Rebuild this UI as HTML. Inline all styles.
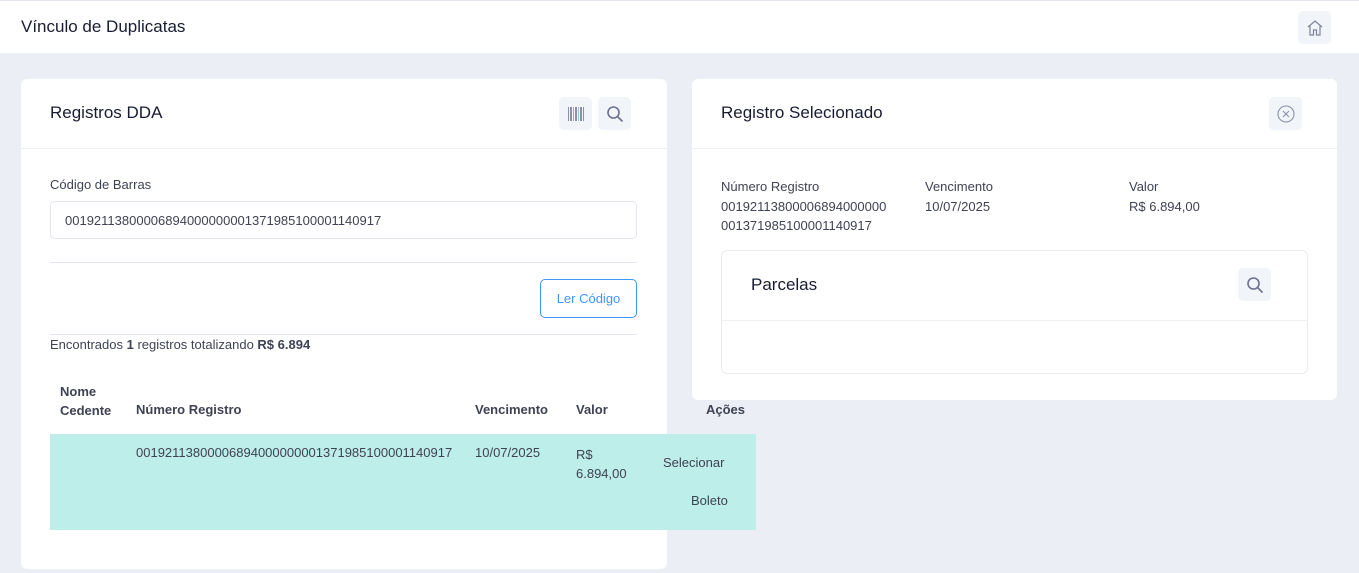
<!DOCTYPE html><html><head><style>
*{box-sizing:border-box;margin:0;padding:0}
body{width:1359px;height:573px;background:#eceef5;font-family:"Liberation Sans",sans-serif;color:#3f4254;position:relative;overflow:hidden}
.abs{position:absolute}
.hdr{left:0;top:0;width:1359px;height:53px;background:#fff;border-top:1px solid #e4e6ef}
.card{background:#fff;border-radius:6px}
.btn{width:33px;height:33px;background:#f1f4f8;border-radius:5px;display:flex;align-items:center;justify-content:center}
.t{font-size:13px;color:#3f4254}
.b{font-weight:bold}
</style></head><body>
<div class="abs hdr"></div>
<div class="abs" style="left:21px;top:17px;font-size:17px;color:#181c32">Vínculo de Duplicatas</div>
<div class="abs btn" style="left:1298px;top:11px"><svg width="18" height="18" viewBox="0 0 18 18" fill="none" stroke="#7e8299" stroke-width="1.2"><path d="M2 8L9 2l7 6M4 7v9h3.5v-5h3v5H14V7"/></svg></div>

<div class="abs card" style="left:21px;top:79px;width:646px;height:490px"></div>
<div class="abs" style="left:21px;top:148px;width:646px;height:1px;background:#eff2f5"></div>
<div class="abs" style="left:50px;top:103px;font-size:17px;color:#181c32">Registros DDA</div>
<div class="abs btn" style="left:559px;top:97px"><svg width="18" height="14"><g fill="#8a90a8"><rect x="1" y="0" width="1" height="14"/><rect x="3" y="0" width="2" height="14"/><rect x="6" y="0" width="1" height="14" fill="#b79cd0"/><rect x="8" y="0" width="2" height="14"/><rect x="11" y="0" width="1" height="14" fill="#9bc0d8"/><rect x="13" y="0" width="2" height="14"/><rect x="16" y="0" width="1" height="14"/></g></svg></div>
<div class="abs btn" style="left:598px;top:97px"><svg width="18" height="18" fill="none" stroke="#6b7190" stroke-width="1.6"><circle cx="7.5" cy="7.5" r="5.5"/><path d="M11.5 11.5l5 5"/></svg></div>
<div class="abs t" style="left:50px;top:177px">Código de Barras</div>
<div class="abs t" style="left:50px;top:201px;width:587px;height:38px;border:1px solid #e4e6ef;border-radius:5px;padding:11px 14px">0019211380000689400000000137198510000114091​7</div>
<div class="abs" style="left:50px;top:262px;width:587px;height:1px;background:#e4e6ef"></div>
<div class="abs t" style="left:540px;top:279px;width:97px;height:39px;border:1px solid #3e97ff;border-radius:5px;color:#3e97ff;text-align:center;line-height:37px">Ler Código</div>
<div class="abs" style="left:50px;top:334px;width:587px;height:1px;background:#e4e6ef"></div>
<div class="abs t" style="left:50px;top:337px">Encontrados <b>1</b> registros totalizando <b>R$ 6.894</b></div>
<div class="abs t b" style="left:60px;top:382px;line-height:19px">Nome<br>Cedente</div>
<div class="abs t b" style="left:136px;top:402px">Número Registro</div>
<div class="abs t b" style="left:475px;top:402px">Vencimento</div>
<div class="abs t b" style="left:576px;top:402px">Valor</div>
<div class="abs t b" style="left:706px;top:402px">Ações</div>
<div class="abs" style="left:50px;top:434px;width:706px;height:96px;background:#bdeeea"></div>
<div class="abs t" style="left:136px;top:445px">00192113800006894000000001371985100001140917</div>
<div class="abs t" style="left:475px;top:445px">10/07/2025</div>
<div class="abs t" style="left:576px;top:445px;line-height:19px">R$<br>6.894,00</div>
<div class="abs t" style="left:663px;top:455px">Selecionar</div>
<div class="abs t" style="left:691px;top:493px">Boleto</div>

<div class="abs card" style="left:692px;top:79px;width:645px;height:321px"></div>
<div class="abs" style="left:692px;top:148px;width:645px;height:1px;background:#eff2f5"></div>
<div class="abs" style="left:721px;top:103px;font-size:17px;color:#181c32">Registro Selecionado</div>
<div class="abs btn" style="left:1269px;top:97px"><svg width="20" height="20" fill="none" stroke="#8a90a8" stroke-width="1.1"><circle cx="10" cy="10" r="8"/><path d="M7 7l6 6M13 7l-6 6"/></svg></div>
<div class="abs t" style="left:721px;top:177px;line-height:19.5px">Número Registro<br>00192113800006894000000<br>001371985100001140917</div>
<div class="abs t" style="left:925px;top:177px;line-height:19.5px">Vencimento<br>10/07/2025</div>
<div class="abs t" style="left:1129px;top:177px;line-height:19.5px">Valor<br>R$ 6.894,00</div>
<div class="abs" style="left:721px;top:250px;width:587px;height:124px;border:1px solid #e9ebf1;border-radius:6px"></div>
<div class="abs" style="left:722px;top:320px;width:585px;height:1px;background:#eff2f5"></div>
<div class="abs" style="left:751px;top:275px;font-size:17px;color:#181c32">Parcelas</div>
<div class="abs btn" style="left:1238px;top:268px"><svg width="18" height="18" fill="none" stroke="#6b7190" stroke-width="1.6"><circle cx="7.5" cy="7.5" r="5.5"/><path d="M11.5 11.5l5 5"/></svg></div>
</body></html>
